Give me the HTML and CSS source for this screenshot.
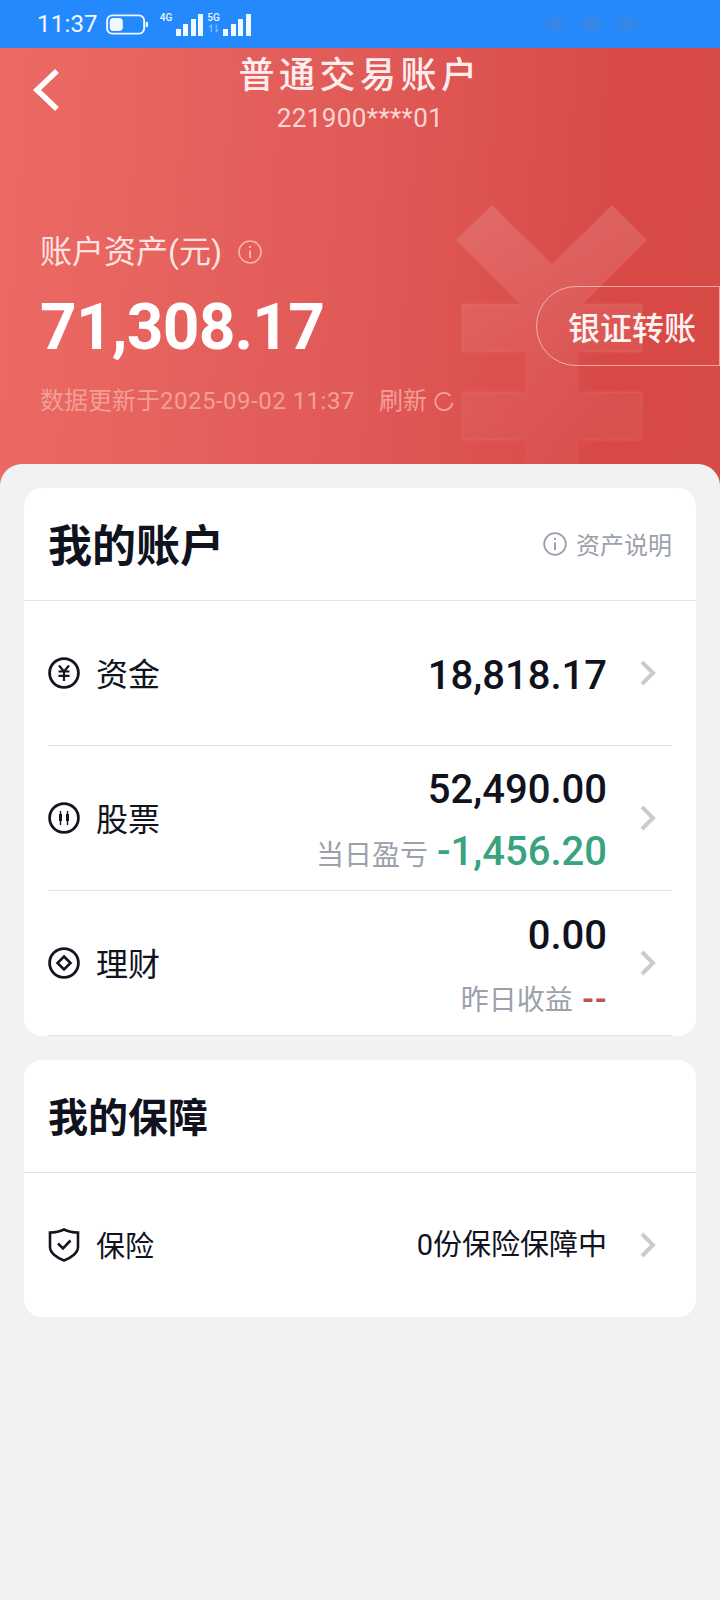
FILE: index.html
```html
<!DOCTYPE html>
<html lang="zh-CN">
<head>
  <meta charset="UTF-8">
  <title>普通交易账户</title>
  <link rel="stylesheet" href="styles.css">
</head>
<body>
  <div class="status-bar">
    <span class="clock">11:37</span>
    <svg class="battery" width="43" height="21" viewBox="0 0 46 22">
      <rect x="1.2" y="1.2" width="39.6" height="19.6" rx="5.5" fill="none" stroke="#f2f8ff" stroke-width="2"/>
      <rect x="4" y="4" width="14" height="14" rx="4" fill="#f2f8ff"/>
      <rect x="42.5" y="8" width="2.5" height="6" rx="1.2" fill="#f2f8ff"/>
    </svg>
    <div class="signal">
      <span class="net">4G</span>
      <span class="bars"><i class="b1"></i><i class="b2"></i><i class="b3"></i><i class="b4"></i></span>
      <span class="net net-5g">5G<b>↿⇂</b></span>
      <span class="bars"><i class="b1"></i><i class="b2"></i><i class="b3"></i><i class="b4"></i></span>
    </div>
    <div class="status-smudge"><i></i><i></i><i></i></div>
  </div>

  <header class="hero">
    <!-- big yuan mark behind the balance, fades out towards the sheet -->
    <svg class="yuan-mark" width="200" height="262" viewBox="0 0 200 262">
      <defs>
        <linearGradient id="yuanFade" x1="0" y1="0" x2="0" y2="1">
          <stop offset="0" stop-color="#fff" stop-opacity=".14"/>
          <stop offset=".6" stop-color="#fff" stop-opacity=".06"/>
          <stop offset="1" stop-color="#fff" stop-opacity=".03"/>
        </linearGradient>
      </defs>
      <path d="M36 1 L96 60 L156 1 L191 36 L127 100 H186 V148 H123 V188 H186 V236 H123 V262 H69 V236 H6 V188 H69 V148 H6 V100 H64 L0 36 Z" fill="url(#yuanFade)"/>
      <path d="M6 100 V148 H69 M123 148 H186 V100 H127 M6 100 H64 M6 188 V236 H69 M123 236 H186 V188 H123 M6 188 H69" stroke="#fff" stroke-opacity=".09" fill="none"/>
    </svg>

    <div class="nav">
      <svg class="back" width="30" height="44" viewBox="0 0 30 44">
        <path d="M26 3 L6 22 L26 41" fill="none" stroke="#fff" stroke-width="5.5"/>
      </svg>
      <h1>普通交易账户</h1>
      <div class="account-no">221900****01</div>
    </div>

    <div class="assets">
      <div class="assets-info">
        <div class="assets-label">
          账户资产(元)
          <svg width="24" height="24" viewBox="0 0 24 24">
            <circle cx="12" cy="12" r="11" fill="none" stroke="#f9b3ac" stroke-width="1.6"/>
            <path d="M12 10.5 V18 M12 6 V8" stroke="#f9b3ac" stroke-width="2" fill="none"/>
          </svg>
        </div>
        <div class="assets-total">71,308.17</div>
        <div class="assets-time">
          <span>数据更新于<span class="stamp">2025-09-02 11:37</span></span>
          <span class="refresh">刷新
            <svg width="20" height="20" viewBox="0 0 20 20">
              <path d="M16.5 5 A8.6 8.6 0 1 0 18.4 12" fill="none" stroke="#f4a19b" stroke-width="1.8"/>
            </svg>
          </span>
        </div>
      </div>
      <button class="transfer">银证转账</button>
    </div>
  </header>

  <main class="sheet">
    <section class="card card-account">
      <div class="card-head">
        <h2 class="card-title">我的账户</h2>
        <div class="card-note">
          <svg width="24" height="24" viewBox="0 0 24 24">
            <circle cx="12" cy="12" r="10.8" fill="none" stroke="#9ba1ab" stroke-width="1.8"/>
            <path d="M12 10.5 V18 M12 6 V8" stroke="#9ba1ab" stroke-width="2" fill="none"/>
          </svg>
          资产说明
        </div>
      </div>

      <div class="row">
        <svg class="row-icon" width="32" height="32" viewBox="0 0 32 32">
          <circle cx="16" cy="16" r="14.4" fill="none" stroke="#14161f" stroke-width="2.8"/>
          <path d="M11 8.5 L16 14.5 L21 8.5 M10.5 14.5 H21.5 M10.5 18.8 H21.5 M16 14.5 V24" fill="none" stroke="#14161f" stroke-width="2.2"/>
        </svg>
        <span class="row-label">资金</span>
        <div class="row-values">
          <div class="amount">18,818.17</div>
        </div>
        <svg class="chevron" width="18" height="28" viewBox="0 0 18 28"><path d="M3 3 L14 14 L3 25" fill="none" stroke="#cbcbcd" stroke-width="4"/></svg>
      </div>

      <div class="row">
        <svg class="row-icon" width="32" height="32" viewBox="0 0 32 32">
          <circle cx="16" cy="16" r="14.4" fill="none" stroke="#14161f" stroke-width="2.8"/>
          <path d="M12.5 9 V23 M19.5 9 V23" stroke="#14161f" stroke-width="1.4" fill="none"/>
          <rect x="11" y="12" width="3" height="7" fill="#14161f"/>
          <rect x="18" y="12" width="3" height="7" fill="#14161f"/>
        </svg>
        <span class="row-label">股票</span>
        <div class="row-values row-values-stock">
          <div class="amount">52,490.00</div>
          <div class="row-sub"><span>当日盈亏</span><em class="loss">-1,456.20</em></div>
        </div>
        <svg class="chevron" width="18" height="28" viewBox="0 0 18 28"><path d="M3 3 L14 14 L3 25" fill="none" stroke="#cbcbcd" stroke-width="4"/></svg>
      </div>

      <div class="row">
        <svg class="row-icon" width="32" height="32" viewBox="0 0 32 32">
          <circle cx="16" cy="16" r="14.4" fill="none" stroke="#14161f" stroke-width="2.8"/>
          <path d="M16 9.5 L22.5 16 L16 22.5 L9.5 16 Z" fill="none" stroke="#14161f" stroke-width="2.6"/>
        </svg>
        <span class="row-label">理财</span>
        <div class="row-values row-values-low">
          <div class="amount">0.00</div>
          <div class="row-sub"><span>昨日收益</span><em class="none">--</em></div>
        </div>
        <svg class="chevron" width="18" height="28" viewBox="0 0 18 28"><path d="M3 3 L14 14 L3 25" fill="none" stroke="#cbcbcd" stroke-width="4"/></svg>
      </div>
    </section>

    <section class="card">
      <div class="card-head">
        <h2 class="card-title card-title-sm">我的保障</h2>
      </div>
      <div class="row row-plain">
        <svg class="row-icon" width="32" height="34" viewBox="0 0 32 34">
          <path d="M16 1.5 C20 3.5 25 4.5 30 4.5 V19 C30 25 23 30 16 32.5 C9 30 2 25 2 19 V4.5 C7 4.5 12 3.5 16 1.5 Z" fill="none" stroke="#14161f" stroke-width="2.6"/>
          <path d="M10 15.5 L15 20.5 L22.5 12.5" fill="none" stroke="#14161f" stroke-width="2.6"/>
        </svg>
        <span class="row-label row-label-sm">保险</span>
        <div class="row-values row-values-flat">
          <div class="policy">0份保险保障中</div>
        </div>
        <svg class="chevron" width="18" height="28" viewBox="0 0 18 28"><path d="M3 3 L14 14 L3 25" fill="none" stroke="#cbcbcd" stroke-width="4"/></svg>
      </div>
    </section>
  </main>
</body>
</html>
```

FILE: styles.css
```css
/* base */
html, body {
  margin: 0;
  padding: 0;
  background: #f2f2f4;
  font-family: Roboto, "Noto Sans CJK SC", sans-serif;
  color: #14161f;
}

body {
  width: 720px;
  min-height: 1600px;
  display: flex;
  flex-direction: column;
}

/* status bar */
.status-bar {
  height: 48px;
  background: #2389fd;
  color: #f2f8ff;
  display: flex;
  align-items: center;
  padding-left: 37px;
  box-sizing: border-box;
}

.clock {
  font-size: 24px;
  line-height: 48px;
  letter-spacing: 0.2px;
}

.battery {
  margin-left: 8px;
}

.signal {
  display: flex;
  align-items: flex-end;
  height: 24px;
  margin-left: 11px;
}

.net {
  align-self: flex-start;
  font-size: 10px;
  font-weight: 500;
  line-height: 11px;
  margin-right: 1px;
  width: 15px;
}

.net-5g {
  margin-left: 4px;
  display: flex;
  flex-direction: column;
}

.net-5g b {
  font-size: 10px;
  line-height: 11px;
  color: #7fbcff;
  letter-spacing: -3px;
}

.bars {
  display: flex;
  align-items: flex-end;
  gap: 2.5px;
}

.bars i {
  display: block;
  width: 5px;
  background: #f2f8ff;
}

.bars .b1 { height: 7px; }
.bars .b2 { height: 12px; }
.bars .b3 { height: 17px; }
.bars .b4 { height: 22px; }

.status-smudge {
  margin-left: auto;
  margin-right: 84px;
  width: 90px;
  display: flex;
  justify-content: space-between;
  filter: blur(5px);
  opacity: 0.75;
}

.status-smudge i {
  display: block;
  width: 18px;
  height: 12px;
  background: #4a86d0;
}

/* red header */
.hero {
  position: relative;
  height: 442px;
  margin-bottom: -26px;
  background: linear-gradient(94deg, #ec6a64 0%, #e05a57 50%, #d84946 85%, #d84a46 100%);
  overflow: hidden;
}

.yuan-mark {
  position: absolute;
  left: 456px;
  top: 156px;
}

.nav {
  position: relative;
  height: 92px;
  text-align: center;
}

.back {
  position: absolute;
  left: 31px;
  top: 20px;
}

.nav h1 {
  margin: 0;
  padding-top: 5px;
  font-size: 36px;
  line-height: 46px;
  font-weight: 500;
  letter-spacing: 4.5px;
  color: #fdeeed;
}

.account-no {
  padding-top: 1px;
  font-size: 26px;
  line-height: 36px;
  color: #fbd5d2;
  letter-spacing: 0.4px;
}

.assets {
  position: relative;
  display: flex;
  justify-content: space-between;
  margin-top: 90px;
}

.assets-info {
  padding-left: 40px;
}

.assets-label {
  display: flex;
  align-items: center;
  gap: 16px;
  font-size: 32px;
  line-height: 44px;
  color: #fde3e1;
}

.assets-total {
  margin-top: 14px;
  font-size: 64px;
  line-height: 80px;
  font-weight: 700;
  letter-spacing: -0.8px;
  color: #fff;
}

.assets-time {
  margin-top: 15px;
  display: flex;
  gap: 24px;
  font-size: 24px;
  line-height: 36px;
  color: #f49e98;
}

.stamp {
  letter-spacing: 0.5px;
}

.refresh {
  display: flex;
  align-items: center;
  gap: 7px;
}

.transfer {
  margin-top: 56px;
  width: 184px;
  height: 80px;
  box-sizing: border-box;
  background: transparent;
  border: 1px solid rgba(255, 255, 255, 0.5);
  border-radius: 40px 0 0 40px;
  padding: 0 0 0 8px;
  font-family: inherit;
  font-size: 32px;
  font-weight: 500;
  color: #fdf3f1;
}

/* white cards */
.sheet {
  position: relative;
  flex: 1;
  background: #f2f2f4;
  border-radius: 22px 22px 0 0;
  padding: 24px 24px 0 24px;
  display: flex;
  flex-direction: column;
  gap: 24px;
}

.card {
  background: #fff;
  border-radius: 18px;
  overflow: hidden;
}

.card-head {
  height: 113px;
  box-sizing: border-box;
  padding: 0 24px;
  display: flex;
  align-items: center;
  justify-content: space-between;
  border-bottom: 1px solid #e4e4e6;
}

.card-title {
  margin: 6px 0 0 0;
  font-size: 44px;
  font-weight: 700;
  line-height: 60px;
  color: #10121d;
}

.card-title-sm {
  font-size: 40px;
}

.card-note {
  display: flex;
  align-items: center;
  gap: 9px;
  margin-top: -1px;
  font-size: 24px;
  color: #9ba1ab;
}

.row {
  height: 145px;
  margin: 0 24px;
  box-sizing: border-box;
  display: flex;
  align-items: center;
  border-bottom: 1px solid #e4e4e6;
}

.row-plain {
  height: 144px;
  border-bottom: none;
}

.row-label {
  margin: -3px 0 0 16px;
  font-size: 32px;
  color: #10121d;
}

.row-label-sm {
  font-size: 29px;
}

.row-values {
  margin-left: auto;
  padding-top: 6px;
  text-align: right;
}

.row-values-stock {
  padding-top: 10px;
}

.row-values-low {
  padding-top: 10px;
}

.row-values-low .row-sub {
  margin-top: 15px;
}

.row-values-flat {
  padding-top: 0;
}

.amount {
  font-size: 40px;
  line-height: 48px;
  font-weight: 500;
  color: #10121d;
}

.row-sub {
  margin-top: 14px;
  display: flex;
  align-items: baseline;
  justify-content: flex-end;
  gap: 9px;
  font-size: 28px;
  line-height: 48px;
  color: #9ba1ab;
}

.row-sub em {
  font-style: normal;
  font-weight: 500;
}

.loss {
  font-size: 40px;
  color: #39a27f;
}

.row-sub .none {
  color: #c2524d;
  font-size: 32px;
  font-weight: 700;
}

.policy {
  font-size: 29px;
  line-height: 40px;
  color: #10121d;
}

.chevron {
  margin-left: 32px;
  margin-right: 15px;
}
```
